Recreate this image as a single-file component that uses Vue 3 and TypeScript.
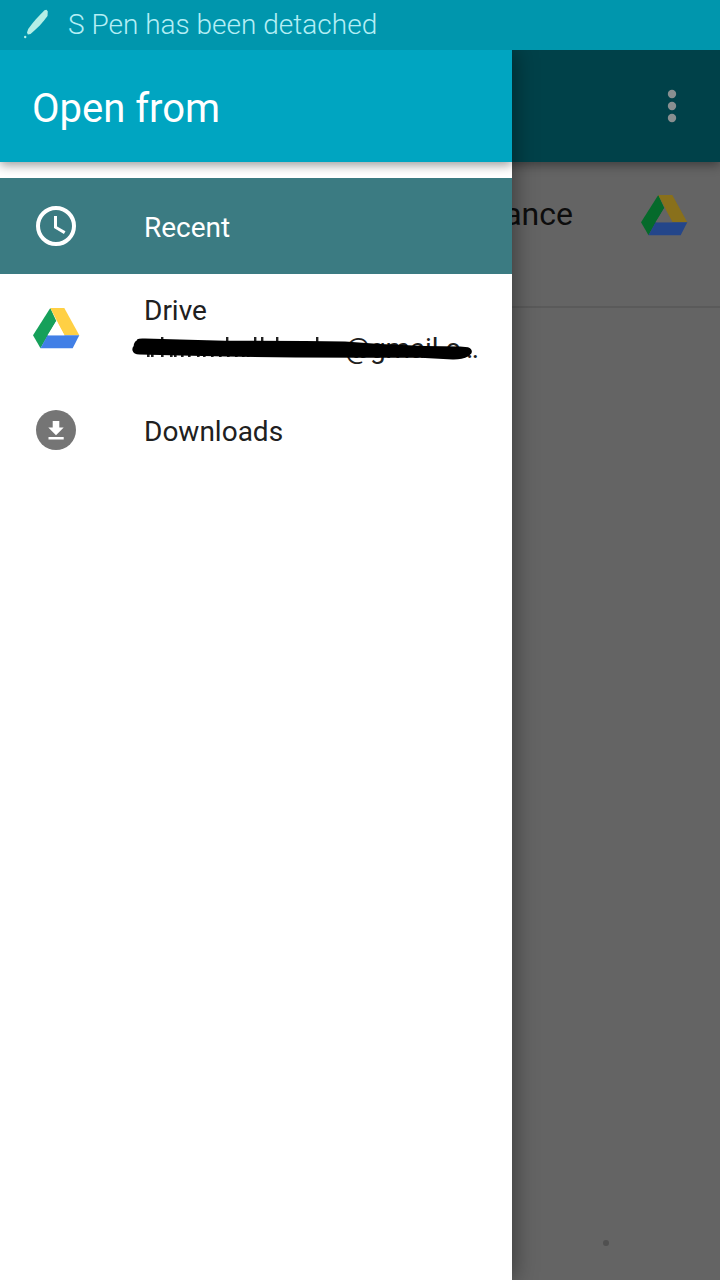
<script setup lang="ts">
const ascenders: number[] = [161, 226, 254, 261, 276, 316]
const feet: number[] = [147, 151, 161, 170, 174, 181, 188, 197, 203, 211, 219, 227, 235, 242, 247, 254, 261, 276, 286, 301, 308, 316, 324, 330, 341]
</script>

<template>
  <div class="screen">
    <header class="status">
      <svg class="pen" width="26" height="32" viewBox="0 0 26 32">
        <path d="M21.500 2.200l2-.5 1.300 1.800-.3 4.500C20 14.500 14 20.500 7.500 26l-2.700.6-.8-2 1.200-3.600C10 14 15.500 8 21.500 2.200z" fill="#b4eee6" />
        <circle cx="2.200" cy="29" r="1.200" fill="#b4eee6" />
      </svg>
      <span>S Pen has been detached</span>
    </header>
    <div class="body">
      <main class="page">
        <div class="bar">
          <svg width="10" height="34" viewBox="0 0 10 34" fill="#888f90">
            <circle cx="5" cy="5" r="4.200" /><circle cx="5" cy="17" r="4.200" /><circle cx="5" cy="29" r="4.200" />
          </svg>
        </div>
        <div class="file">
          <span>ance</span>
          <svg width="47" height="41" viewBox="0 0 47 41">
            <path d="M17.300 0 23.300 13 7.500 40.300 0 27.200z" fill="#056a2b" />
            <path d="M17.300 0h14l15 27.200h-15z" fill="#89701b" />
            <path d="M14.500 27.200h31.800l-6.600 13.100H7.500z" fill="#24468a" />
            <path d="m23.300 13 8.200 14.200h-17z" fill="#646464" />
          </svg>
        </div>
        <i class="speck"></i>
      </main>
      <aside class="drawer">
        <h1>Open from</h1>
        <nav>
          <div class="item active">
            <svg class="icon" width="40" height="40" viewBox="0 0 40 40" fill="none" stroke="#fff">
              <circle cx="20" cy="20" r="18" stroke-width="4" />
              <path d="M19.500 10v11.200l9.200 5.400" stroke-width="3" />
            </svg>
            <span>Recent</span>
          </div>
          <div class="item drive">
            <svg class="icon" width="47" height="41" viewBox="0 0 47 41">
              <path d="M17.300 0 23.300 13 7.500 40.300 0 27.200z" fill="#16a05a" />
              <path d="M17.300 0h14l15 27.200h-15z" fill="#ffd044" />
              <path d="M14.500 27.200h31.800l-6.600 13.100H7.500z" fill="#417fe6" />
              <path d="m23.300 13 8.200 14.200h-17z" fill="#fff" />
            </svg>
            <div class="account">
              <span>Drive</span>
              <span class="mail">@gmail.c…</span>
              <svg class="redaction" width="350" height="34" viewBox="130 332 350 34">
                <rect v-for="x in ascenders" :key="'a' + x" :x="x" y="338" width="2.400" height="8" fill="#222" />
                <rect v-for="x in feet" :key="'f' + x" :x="x" y="350" width="2.600" height="8" fill="#222" />
                <path d="M137 340.500q2-1.500 8-1l35 1 45 1.200 80 .3 40 .6 35 2.500 45 2 35 .3 8 .8q5 2 3.500 6l-3 3q-7 3.500-16 3.200l-32-1.700-60 .1-65-.2-70-1-45-1.200-41-1q-6-.2-7-4-.6-2.500 1.200-4.300 0-4 3.300-5.900z" fill="#000" />
              </svg>
            </div>
          </div>
          <div class="item">
            <svg class="icon" width="40" height="40" viewBox="0 0 40 40">
              <circle cx="20" cy="20" r="20" fill="#757575" />
              <path d="M16.700 11h6.600v6.500h4.400L20 25.200l-7.700-7.700h4.400zM12.500 27h15.200v2.400H12.500z" fill="#fff" />
            </svg>
            <span>Downloads</span>
          </div>
        </nav>
      </aside>
    </div>
  </div>
</template>

<style>
body {
  margin: 0;
  overflow: hidden;
}
</style>

<style scoped>
.screen {
  width: 720px;
  height: 1280px;
  display: flex;
  flex-direction: column;
  overflow: hidden;
  font-family: Roboto, "Liberation Sans", sans-serif;
  font-size: 28px;
  color: #202020;
}
.status {
  position: relative;
  z-index: 1;
  height: 50px;
  flex: none;
  display: flex;
  align-items: center;
  box-sizing: border-box;
  padding: 0 0 2px 23px;
  background: #0096ad;
  color: #b4eef5;
  font-weight: 300;
}
.pen {
  margin-right: 19px;
}
.status span {
  white-space: nowrap;
}
.body {
  flex: 1;
  display: grid;
  grid-template-columns: 512px 208px;
}
.page {
  grid-area: 1 / 1 / 2 / 3;
  position: relative;
  background: #646464;
}
.bar {
  position: relative;
  height: 112px;
  box-sizing: border-box;
  padding-right: 43px;
  display: flex;
  align-items: center;
  justify-content: flex-end;
  background: #004149;
  box-shadow: 0 3px 10px rgba(0, 0, 0, 0.4);
}
.file {
  height: 146px;
  box-sizing: border-box;
  padding: 33px 32px 0 0;
  display: flex;
  align-items: flex-start;
  justify-content: flex-end;
  border-bottom: 2px solid #5a5a5a;
  font-size: 32px;
  line-height: 38px;
  color: #0d0d0d;
}
.file svg {
  margin-left: 68px;
}
.speck {
  position: absolute;
  left: 603px;
  top: 1190px;
  width: 6px;
  height: 6px;
  border-radius: 50%;
  background: #505050;
}
.drawer {
  grid-area: 1 / 1 / 2 / 2;
  position: relative;
  background: #fff;
  box-shadow: 2px 0 22px rgba(0, 0, 0, 0.42);
  clip-path: inset(0 -40px 0 0);
}
h1 {
  position: relative;
  height: 112px;
  box-sizing: border-box;
  margin: 0;
  padding: 4px 0 0 32px;
  display: flex;
  align-items: center;
  background: #00a5c1;
  color: #fff;
  font-size: 40px;
  font-weight: 400;
  box-shadow: 0 3px 10px rgba(0, 0, 0, 0.4);
  clip-path: inset(0 0 -20px 0);
}
nav {
  padding-top: 16px;
  position: relative;
}
.item {
  height: 96px;
  display: grid;
  grid-template-columns: 112px 1fr;
  align-items: center;
  padding-left: 32px;
}
.item > span {
  padding-top: 3px;
}
.item .icon {
  margin-left: 4px;
}
.active {
  background: #3b7b82;
  color: #fff;
}
.drive {
  height: 108px;
}
.drive .icon {
  margin-left: 1px;
}
.account {
  position: relative;
  display: flex;
  flex-direction: column;
  line-height: 38px;
  padding-top: 4px;
}
.mail {
  padding-left: 201px;
  letter-spacing: -0.15px;
  white-space: nowrap;
}
.redaction {
  position: absolute;
  left: -14px;
  top: 43px;
}
</style>
